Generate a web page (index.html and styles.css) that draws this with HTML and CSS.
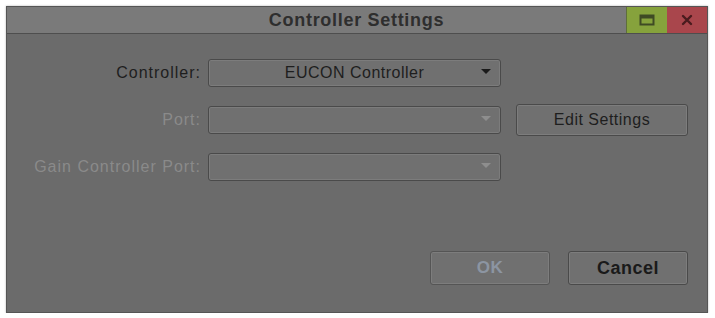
FILE: index.html
```html
<!DOCTYPE html>
<html>
<head>
<meta charset="utf-8">
<link rel="stylesheet" href="styles.css">
</head>
<body>
<div class="dialog">
  <div class="titlebar">
    <div class="title">Controller Settings</div>
    <div class="tb-btn tb-max">
      <svg width="16" height="12" viewBox="0 0 16 12"><rect x="1.5" y="1.5" width="13" height="9" fill="none" stroke="#3f4a24" stroke-width="2"/><rect x="1.5" y="1.5" width="13" height="3" fill="#3f4a24"/></svg>
    </div>
    <div class="tb-btn tb-close">
      <svg width="14" height="14" viewBox="0 0 14 14"><path d="M3 3 L11 11 M11 3 L3 11" stroke="#4a1b1e" stroke-width="2.4" stroke-linecap="round"/></svg>
    </div>
  </div>
  <div class="content">
    <div class="form">
      <div class="label">Controller:</div>
      <div class="select"><span class="sel-text">EUCON Controller</span><span class="arrow"></span></div>
      <div></div>

      <div class="label disabled">Port:</div>
      <div class="select"><span class="sel-text"></span><span class="arrow dim"></span></div>
      <div class="btn edit">Edit Settings</div>

      <div class="label disabled">Gain Controller Port:</div>
      <div class="select"><span class="sel-text"></span><span class="arrow dim"></span></div>
      <div></div>
    </div>
    <div class="footer">
      <div class="btn big ok">OK</div>
      <div class="btn big cancel">Cancel</div>
    </div>
  </div>
</div>
</body>
</html>
```

FILE: styles.css
```css
html, body {
  margin: 0;
  padding: 0;
  background: #ffffff;
}
body {
  padding: 6px 0 0 6px;
  font-family: "Liberation Sans", Arial, sans-serif;
}
.dialog {
  width: 700px;
  height: 305px;
  border: 1px solid #555;
  background: #6b6b6b;
  display: flex;
  flex-direction: column;
  box-shadow: 0 0 2px rgba(0,0,0,0.3);
}
.titlebar {
  height: 26px;
  background: #7a7a7a;
  border-bottom: 1px solid #4e4e4e;
  display: flex;
  align-items: stretch;
}
.title {
  flex: 1;
  text-align: center;
  font-weight: bold;
  font-size: 18px;
  letter-spacing: 0.7px;
  color: #2e2e2e;
  line-height: 26px;
  padding-left: 80px;
}
.tb-btn {
  width: 40px;
  display: flex;
  align-items: center;
  justify-content: center;
}
.tb-max { background: #86a23c; border-left: 1px solid #5e6e3a; }
.tb-close { background: #a9464c; }
.content {
  flex: 1;
  display: flex;
  flex-direction: column;
  padding: 25px 19px 27px 0;
}
.form {
  display: grid;
  grid-template-columns: 194px 293px 180px;
  column-gap: 7px;
  row-gap: 17px;
  align-items: center;
}
.label {
  text-align: right;
  font-size: 16px;
  letter-spacing: 1px;
  color: #1e1e1e;
}
.label.disabled { color: #8a8a8a; }
.select {
  height: 26px;
  border: 1px solid #4a4a4a;
  border-radius: 3px;
  background: #707070;
  box-shadow: inset 0 0 0 1px #7c7c7c;
  display: flex;
  align-items: center;
}
.sel-text {
  flex: 1;
  text-align: center;
  font-size: 16px;
  letter-spacing: 0.5px;
  color: #1e1e1e;
  padding-left: 19px;
}
.arrow {
  width: 0;
  height: 0;
  border-left: 5px solid transparent;
  border-right: 5px solid transparent;
  border-top: 5px solid #1a1a1a;
  margin: 0 9px 4px 0;
}
.arrow.dim { border-top-color: #8e8e8e; }
.btn {
  box-sizing: border-box;
  border: 1px solid #4a4a4a;
  border-radius: 3px;
  background: #707070;
  box-shadow: inset 0 0 0 1px #7d7d7d;
  display: flex;
  align-items: center;
  justify-content: center;
  font-size: 16px;
  letter-spacing: 0.5px;
  color: #1e1e1e;
}
.edit { height: 32px; margin-left: 8px; }
.footer {
  margin-top: auto;
  display: flex;
  justify-content: flex-end;
  gap: 18px;
}
.big {
  width: 120px;
  height: 34px;
  font-weight: bold;
  font-size: 17px;
}
.ok { color: #8c95a2; border-color: #555; }
.cancel { color: #1a1a1a; font-size: 18px; }
```
